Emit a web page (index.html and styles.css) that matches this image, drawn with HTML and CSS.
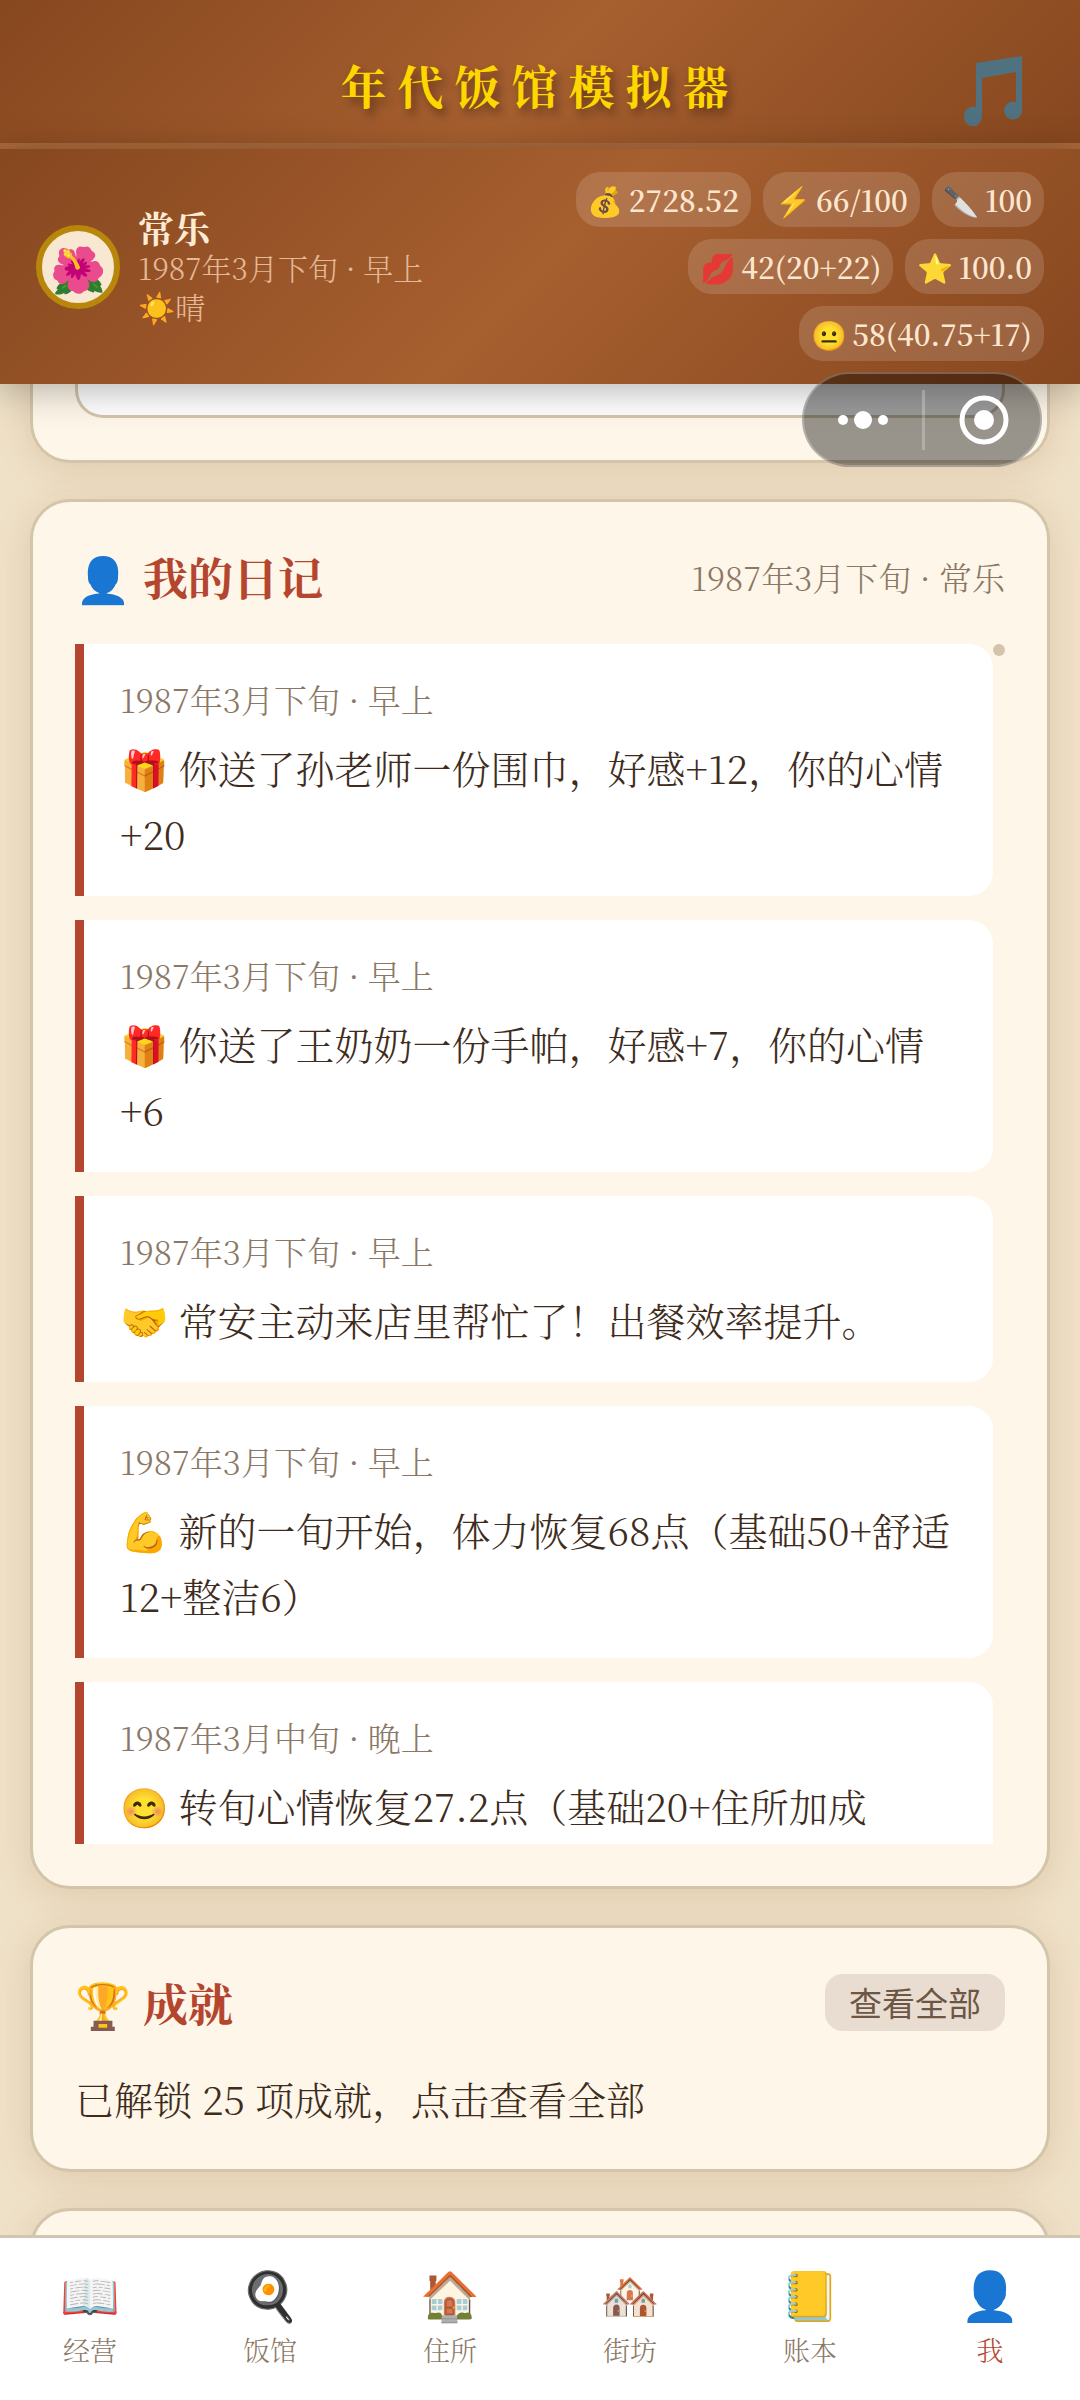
FILE: index.html
```
<!DOCTYPE html>
<html lang="zh-CN">
  <head>
    <meta charset="UTF-8" />
    <meta name="viewport" content="width=device-width, initial-scale=1.0" />
    <title>年代饭馆模拟器</title>
    <link rel="stylesheet" href="styles.css" />
  </head>
  <body>
    <!-- Title -->
    <header class="titlebar">
      <h1>年代饭馆模拟器</h1>
      <button class="music" aria-label="音乐">
        <svg width="60" height="70" viewBox="0 0 60 70" fill="#50717f">
          <path d="M13 7 L59 0 V56 A9 9 0 1 1 53 46 V16 L19 22 V60 A9 10 0 1 1 13 51 Z" />
        </svg>
      </button>
    </header>

    <!-- Player status -->
    <section class="status">
      <div class="player">
        <div class="avatar">🌺</div>
        <div class="player-info">
          <div class="name">常乐</div>
          <div class="date">1987年3月下旬 · 早上</div>
          <div class="date">☀️晴</div>
        </div>
      </div>
      <div class="chips">
        <span class="chip"><span>💰</span>2728.52</span>
        <span class="chip"><span>⚡</span>66/100</span>
        <span class="chip"><span>🔪</span>100</span>
        <span class="chip"><span>💋</span>42(20+22)</span>
        <span class="chip"><span>⭐</span>100.0</span>
        <span class="chip"><span>😐</span>58(40.75+17)</span>
      </div>
      <div class="capsule">
        <button aria-label="更多">
          <svg width="50" height="50" viewBox="0 0 50 50" fill="#fff">
            <circle cx="5" cy="25" r="5" />
            <circle cx="25" cy="25" r="9" />
            <circle cx="45" cy="25" r="5" />
          </svg>
        </button>
        <button aria-label="关闭">
          <svg width="50" height="50" viewBox="0 0 50 50">
            <circle cx="25" cy="25" r="22" fill="none" stroke="#fff" stroke-width="5" />
            <circle cx="25" cy="25" r="10" fill="#fff" />
          </svg>
        </button>
      </div>
    </section>

    <main>
      <div class="card card-scrolled">
        <div class="panel"></div>
      </div>

      <!-- Diary -->
      <section class="card">
        <div class="card-head">
          <h2><span>👤</span>我的日记</h2>
          <span class="card-note">1987年3月下旬 · 常乐</span>
        </div>
        <div class="diary">
          <div class="entries">
            <article class="entry">
              <p class="time">1987年3月下旬 · 早上</p>
              <p>🎁 你送了孙老师一份围巾，好感+12，你的心情+20</p>
            </article>
            <article class="entry">
              <p class="time">1987年3月下旬 · 早上</p>
              <p>🎁 你送了王奶奶一份手帕，好感+7，你的心情+6</p>
            </article>
            <article class="entry">
              <p class="time">1987年3月下旬 · 早上</p>
              <p>🤝 常安主动来店里帮忙了！出餐效率提升。</p>
            </article>
            <article class="entry">
              <p class="time">1987年3月下旬 · 早上</p>
              <p>💪 新的一旬开始，体力恢复68点（基础50+舒适12+整洁6）</p>
            </article>
            <article class="entry">
              <p class="time">1987年3月中旬 · 晚上</p>
              <p>😊 转旬心情恢复27.2点（基础20+住所加成</p>
            </article>
          </div>
          <div class="scroll"></div>
        </div>
      </section>

      <!-- Achievements -->
      <section class="card">
        <div class="card-head">
          <h2><span>🏆</span>成就</h2>
          <button class="more">查看全部</button>
        </div>
        <p class="card-text">已解锁 25 项成就，点击查看全部</p>
      </section>

      <section class="card card-next"></section>
    </main>

    <nav class="tabs">
      <a href="#"><span>📖</span>经营</a>
      <a href="#"><span>🍳</span>饭馆</a>
      <a href="#"><span>🏠</span>住所</a>
      <a href="#"><span>🏘️</span>街坊</a>
      <a href="#"><span>📒</span>账本</a>
      <a href="#" class="active"><span>👤</span>我</a>
    </nav>
  </body>
</html>
```
FILE: styles.css
```
* {
  box-sizing: border-box;
  margin: 0;
  padding: 0;
}

body {
  display: flex;
  flex-direction: column;
  height: 100vh;
  overflow: hidden;
  background: #efe1c7;
  color: #3e2c20;
  font-family: "Noto Serif CJK SC", "Noto Serif SC", "Noto Sans CJK SC", "Noto Color Emoji", serif;
  font-size: 39px;
  font-weight: 300;
}

button {
  border: none;
  background: none;
  font-family: inherit;
}

.titlebar {
  display: grid;
  grid-template-columns: 1fr auto 1fr;
  align-items: center;
  padding: 24px 57px 0;
  height: 149px;
  border-bottom: 6px solid #a9693a;
  background: linear-gradient(135deg, #87471f, #a65f2f 50%, #87471f);
}

.titlebar h1 {
  grid-column: 2;
  color: #ffd700;
  font-size: 46px;
  letter-spacing: 11px;
  text-shadow: 4px 6px 10px rgba(0, 0, 0, 0.4);
}

.music {
  justify-self: end;
  padding-top: 14px;
}

.music svg {
  display: block;
}

.status {
  position: relative;
  z-index: 2;
  display: flex;
  align-items: center;
  justify-content: space-between;
  gap: 24px;
  padding: 23px 36px;
  background: linear-gradient(135deg, #87471f, #a65f2f 50%, #87471f);
  box-shadow: 0 6px 36px rgba(0, 0, 0, 0.3);
}

.player {
  display: flex;
  flex-shrink: 0;
  align-items: center;
  gap: 18px;
}

.avatar {
  display: flex;
  align-items: center;
  justify-content: center;
  width: 84px;
  height: 84px;
  border: 6px solid #b8860b;
  border-radius: 50%;
  background: #f8e8d2;
  font-size: 45px;
}

.name {
  color: #fdebd5;
  font-size: 36px;
  font-weight: bold;
  line-height: 40px;
}

.date {
  color: #e3b996;
  font-size: 30px;
  line-height: 39px;
}

.chips {
  display: flex;
  flex-wrap: wrap;
  justify-content: flex-end;
  gap: 12px;
}

.chip {
  display: flex;
  align-items: center;
  gap: 5px;
  padding: 0 12px;
  border-radius: 24px;
  background: rgba(255, 255, 255, 0.14);
  color: #fde6cf;
  font-size: 29px;
  font-weight: 600;
  line-height: 55px;
}

/* floating menu over the page */
.capsule {
  position: absolute;
  top: 223px;
  right: 38px;
  display: flex;
  width: 240px;
  height: 95px;
  border: 2px solid rgba(255, 255, 255, 0.25);
  border-radius: 48px;
  background: rgba(0, 0, 0, 0.4);
}

.capsule button {
  display: flex;
  flex: 1;
  align-items: center;
  justify-content: center;
}

.capsule button + button::before {
  content: "";
  width: 3px;
  height: 60px;
  margin-right: 34px;
  background: rgba(255, 255, 255, 0.25);
}

.capsule button + button {
  justify-content: flex-start;
}

main {
  display: flex;
  flex: 1;
  flex-direction: column;
  gap: 36px;
  min-height: 0;
  padding: 0 30px;
  overflow: hidden;
}

.card {
  flex-shrink: 0;
  padding: 42px;
  border: 3px solid #d3c5aa;
  border-radius: 40px;
  background: #fef6e8;
  box-shadow: 0 6px 36px rgba(139, 69, 19, 0.15);
}

.card-scrolled {
  padding-top: 0;
  border-top: none;
  border-top-left-radius: 0;
  border-top-right-radius: 0;
}

.panel {
  height: 34px;
  border: 3px solid #d3c5aa;
  border-top: none;
  border-radius: 0 0 28px 28px;
  background: #fff;
}

.card-head {
  display: flex;
  align-items: center;
  justify-content: space-between;
  margin-bottom: 35px;
}

.card-head h2 {
  display: flex;
  gap: 12px;
  color: #b4462f;
  font-size: 45px;
  font-weight: bold;
  line-height: 65px;
}

.card-note,
.time {
  color: #8b7765;
  font-size: 33px;
}

.diary {
  display: flex;
  max-height: 1200px;
  overflow: hidden;
}

.entries {
  display: flex;
  flex: 1;
  flex-direction: column;
  gap: 24px;
}

.entry {
  flex-shrink: 0;
  padding: 30px 36px;
  border-left: 9px solid #b4462f;
  border-radius: 0 24px 24px 0;
  background: #fff;
  line-height: 66px;
}

.entry .time {
  margin-bottom: 10px;
  line-height: 50px;
}

.scroll {
  width: 12px;
  height: 12px;
  border-radius: 50%;
  background: #d3c5aa;
}

.more {
  padding: 0 24px;
  border-radius: 18px;
  background: #e9ddd2;
  color: #6d5744;
  font-family: "Noto Sans CJK SC", sans-serif;
  font-size: 33px;
  line-height: 57px;
}

.card-text {
  line-height: 57px;
}

.card-next {
  height: 120px;
}

.tabs {
  position: relative;
  display: flex;
  padding: 16px 0 32px;
  border-top: 3px solid #d3c5b4;
  background: #fff;
}

.tabs a {
  display: flex;
  flex: 1;
  flex-direction: column;
  align-items: center;
  color: #8b7765;
  font-size: 27px;
  line-height: 36px;
  text-decoration: none;
}

.tabs span {
  font-size: 48px;
  line-height: 78px;
}

.tabs .active {
  color: #b4462f;
}
```
